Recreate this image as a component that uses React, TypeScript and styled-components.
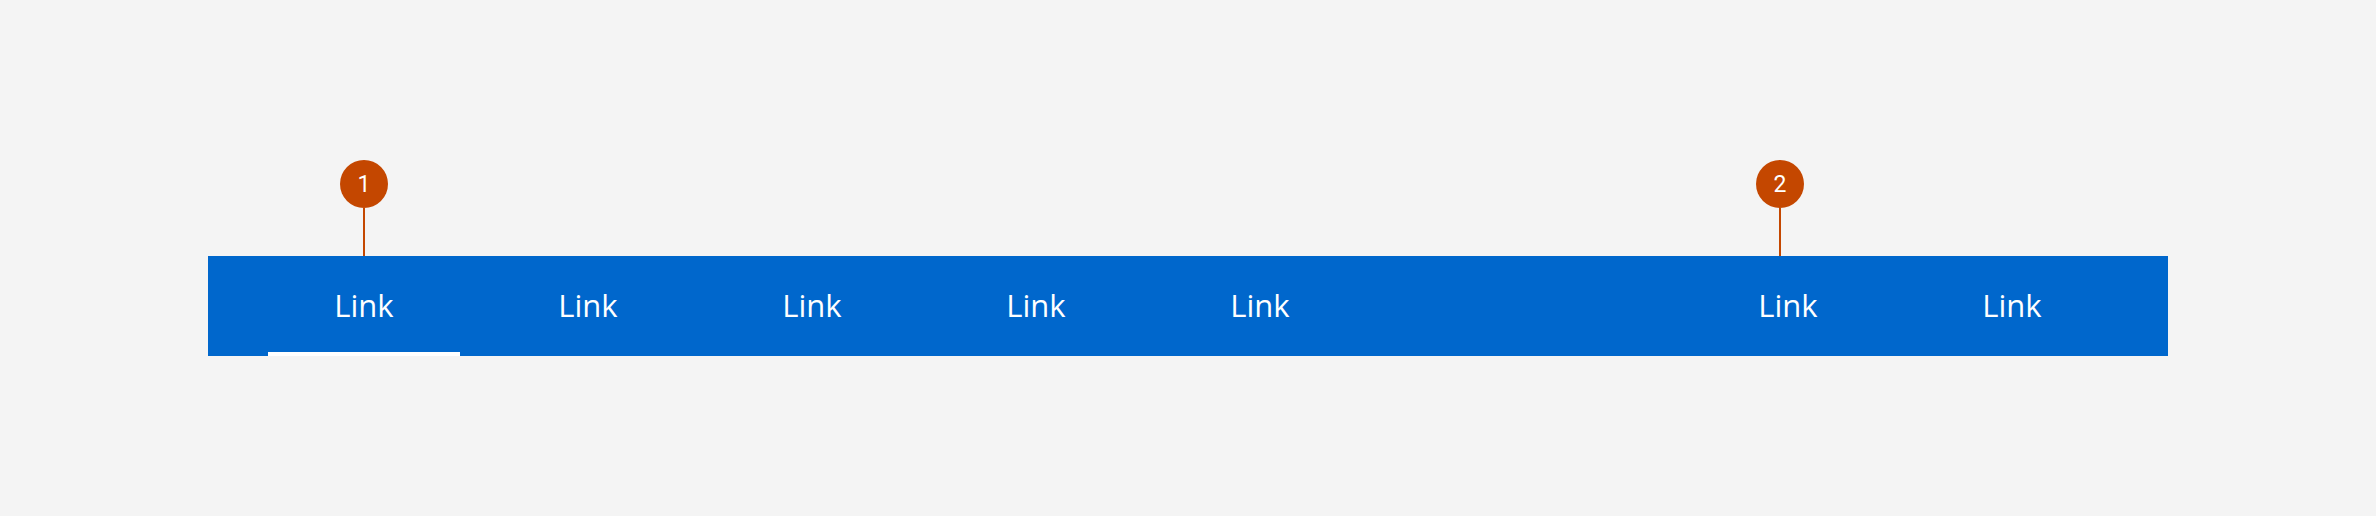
import * as React from 'react';
import styled, { createGlobalStyle, css } from 'styled-components';

const GlobalStyle = createGlobalStyle`
  html, body {
    margin: 0;
    padding: 0;
    background: #f4f4f4;
  }
`;

const Page = styled.div`
  width: 2376px;
  height: 516px;
  box-sizing: border-box;
  padding: 256px 208px 0 208px;
  background: #f4f4f4;
  font-family: 'Open Sans', 'Noto Sans', Arial, sans-serif;
`;

const Nav = styled.nav`
  display: flex;
  justify-content: space-between;
  align-items: stretch;
  height: 100px;
  padding: 0 44px;
  background: #0067cc;
`;

const Group = styled.div`
  display: flex;
`;

const Tab = styled.a<{ $active?: boolean }>`
  position: relative;
  display: flex;
  align-items: center;
  justify-content: center;
  width: 224px;
  padding-bottom: 2px;
  box-sizing: border-box;
  color: #ffffff;
  font-size: 31px;
  line-height: 1;
  text-decoration: none;
  cursor: pointer;

  ${({ $active }) =>
    $active &&
    css`
      &:after {
        content: '';
        position: absolute;
        left: 16px;
        right: 16px;
        bottom: 0;
        height: 4px;
        background: #ffffff;
      }
    `}
`;

const Marker = styled.div<{ $shift: number }>`
  position: absolute;
  bottom: 100%;
  left: calc(50% + ${({ $shift }) => $shift}px);
  transform: translateX(-50%);
  display: flex;
  flex-direction: column;
  align-items: center;
`;

const Bubble = styled.span`
  display: flex;
  align-items: center;
  justify-content: center;
  width: 48px;
  height: 48px;
  border-radius: 50%;
  background: #c44700;
  color: #ffffff;
  font-family: Roboto, 'Open Sans', sans-serif;
  font-size: 23px;
`;

const Stem = styled.span`
  width: 2px;
  height: 48px;
  background: #c44700;
`;

const Annotation = ({ n, shift = 0 }: { n: number; shift?: number }) => (
  <Marker $shift={shift}>
    <Bubble>{n}</Bubble>
    <Stem />
  </Marker>
);

export default function App() {
  return (
    <>
      <GlobalStyle />
      <Page>
        <Nav>
          <Group>
            <Tab $active>
              Link
              <Annotation n={1} />
            </Tab>
            <Tab>Link</Tab>
            <Tab>Link</Tab>
            <Tab>Link</Tab>
            <Tab>Link</Tab>
          </Group>
          <Group>
            <Tab>
              Link
              <Annotation n={2} shift={-8} />
            </Tab>
            <Tab>Link</Tab>
          </Group>
        </Nav>
      </Page>
    </>
  );
}
